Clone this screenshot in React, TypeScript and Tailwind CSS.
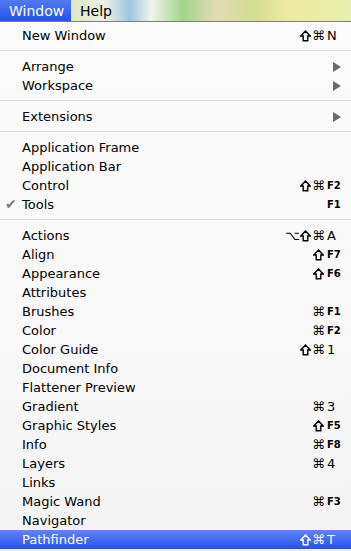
import React from 'react';

type Item = {
  label: string;
  mods?: string;
  keyName?: string;
  submenu?: boolean;
  checked?: boolean;
  active?: boolean;
};

const sections: Item[][] = [
  [{ label: 'New Window', mods: '⇧⌘', keyName: 'N' }],
  [
    { label: 'Arrange', submenu: true },
    { label: 'Workspace', submenu: true },
  ],
  [{ label: 'Extensions', submenu: true }],
  [
    { label: 'Application Frame' },
    { label: 'Application Bar' },
    { label: 'Control', mods: '⇧⌘', keyName: 'F2' },
    { label: 'Tools', checked: true, keyName: 'F1' },
  ],
  [
    { label: 'Actions', mods: '⌥⇧⌘', keyName: 'A' },
    { label: 'Align', mods: '⇧', keyName: 'F7' },
    { label: 'Appearance', mods: '⇧', keyName: 'F6' },
    { label: 'Attributes' },
    { label: 'Brushes', mods: '⌘', keyName: 'F1' },
    { label: 'Color', mods: '⌘', keyName: 'F2' },
    { label: 'Color Guide', mods: '⇧⌘', keyName: '1' },
    { label: 'Document Info' },
    { label: 'Flattener Preview' },
    { label: 'Gradient', mods: '⌘', keyName: '3' },
    { label: 'Graphic Styles', mods: '⇧', keyName: 'F5' },
    { label: 'Info', mods: '⌘', keyName: 'F8' },
    { label: 'Layers', mods: '⌘', keyName: '4' },
    { label: 'Links' },
    { label: 'Magic Wand', mods: '⌘', keyName: 'F3' },
    { label: 'Navigator' },
    { label: 'Pathfinder', mods: '⇧⌘', keyName: 'T', active: true },
  ],
];

// outlined shift arrow, drawn as the Lucida glyph is heavier than DejaVu's
function ShiftIcon({ color }: { color: string }) {
  return (
    <svg width="11" height="12" viewBox="0 0 11 12" className="mr-[1px]" aria-label="⇧">
      <path
        d="M5.5 1 L10.2 6 L7.8 6 L7.8 10.8 L3.2 10.8 L3.2 6 L0.8 6 Z"
        fill="none"
        stroke={color}
        strokeWidth="1.4"
        strokeLinejoin="miter"
      />
    </svg>
  );
}

function Mods({ mods, color }: { mods: string; color: string }) {
  return (
    <span className="flex items-center text-[13px]">
      {Array.from(mods).map((m, i) =>
        m === '⇧' ? <ShiftIcon key={i} color={color} /> : <span key={i}>{m}</span>
      )}
    </span>
  );
}

function MenuRow({ item }: { item: Item }) {
  const isFKey = item.keyName && item.keyName.startsWith('F');
  const color = item.active ? '#ffffff' : '#000000';
  return (
    <div
      className={
        'relative flex h-[19px] items-center pl-[22px] pr-[6px] leading-none ' +
        (item.active
          ? 'bg-gradient-to-b from-[#6384f4] to-[#2650ef] text-white'
          : 'text-black')
      }
    >
      {item.checked && (
        <span className="absolute left-[5px] top-[2px] text-[14px] text-[#7a7a7a]">✔</span>
      )}
      <span className="flex-1 text-[13px]">{item.label}</span>
      {item.submenu && (
        <svg width="8" height="10" viewBox="0 0 8 10" className="mr-[4px]">
          <path d="M0 0 L8 5 L0 10 Z" fill={item.active ? '#fff' : '#6b6b6b'} />
        </svg>
      )}
      {item.keyName && (
        <div className="flex items-center">
          {item.mods && <Mods mods={item.mods} color={color} />}
          <span
            className={
              'ml-[2px] w-[18px] text-left ' +
              (isFKey ? 'text-[10px] font-bold' : 'text-[13px]')
            }
          >
            {item.keyName}
          </span>
        </div>
      )}
    </div>
  );
}

function Separator() {
  return (
    <div className="h-[12px] pt-[5px]">
      <div className="h-px bg-[#dcdcdc]" />
    </div>
  );
}

export default function App() {
  return (
    <div
      className="h-[551px] w-[351px] overflow-hidden bg-[linear-gradient(180deg,#fbfbfb_0%,#f9f9f9_60%,#f4f4f4_100%)]"
      style={{ fontFamily: '"DejaVu Sans", "Liberation Sans", sans-serif' }}
    >
      {/* menu bar over the blurred desktop picture */}
      <div className="flex h-[22px] items-stretch border-b border-[#7d7d7d] bg-[linear-gradient(90deg,#a8d486_0%,#dfe9c8_21%,#eef0e6_30%,#9cc6df_37%,#f3f3ec_43%,#a2d58c_52%,#e4dcb4_62%,#d2dd92_72%,#eeeaa2_82%,#e8efb0_100%)] text-[14px] leading-none">
        <div className="flex w-[71px] items-center bg-gradient-to-b from-[#5278f4] to-[#2450ea] pl-[9px] text-white">
          Window
        </div>
        <div className="flex items-center pl-[9px] text-black">Help</div>
      </div>

      <div className="pt-[4px]">
        {sections.map((section, i) => (
          <div key={i}>
            {i > 0 && <Separator />}
            {section.map((item) => (
              <MenuRow key={item.label} item={item} />
            ))}
          </div>
        ))}
      </div>
    </div>
  );
}
